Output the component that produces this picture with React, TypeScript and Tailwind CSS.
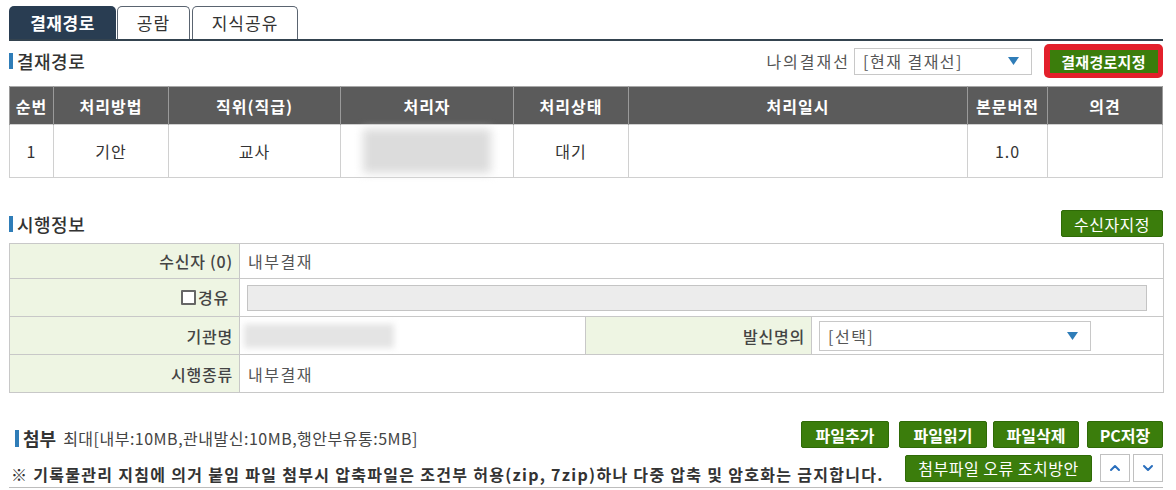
import { ChevronDown, ChevronUp } from "lucide-react";

const FONT = { fontFamily: '"Noto Sans CJK KR", "Noto Sans", sans-serif' };

// 섹션 제목 (파란 바 + 텍스트)
function SectionTitle({ text }: { text: string }) {
    return (
        <div className="flex items-center gap-[4px]">
            <span className="w-[4px] h-[16px] bg-[#2f7db8]" />
            <span className="text-[18px] tracking-[0.5px] leading-none font-medium text-[#333]">{text}</span>
        </div>
    );
}

function GreenButton({ label, className = "" }: { label: string; className?: string }) {
    return (
        <button
            className={`h-[27px] rounded-[2px] bg-[#3b7d0c] border border-[#2f6a07] text-white text-[16px] font-bold leading-none ${className}`}
        >
            {label}
        </button>
    );
}

function SelectBox({ text, className = "" }: { text: string; className?: string }) {
    return (
        <div
            className={`flex items-center justify-between border border-[#c8c8c8] bg-white pl-[8px] pr-[12px] ${className}`}
        >
            <span className="text-[16px] tracking-[1.5px] leading-none text-[#555]">{text}</span>
            <svg width="11" height="8" viewBox="0 0 11 8">
                <path d="M0 0h11L5.5 8z" fill="#2f7db8" />
            </svg>
        </div>
    );
}

const headCols = [
    { label: "순번", w: "w-[44px]" },
    { label: "처리방법", w: "w-[115px]" },
    { label: "직위(직급)", w: "w-[172px]" },
    { label: "처리자", w: "w-[173px]" },
    { label: "처리상태", w: "w-[115px]" },
    { label: "처리일시", w: "w-[339px]" },
    { label: "본문버전", w: "w-[80px]" },
    { label: "의견", w: "w-[115px]" },
];

const cell = "border border-[#d0d0d0]";
const label = "border border-[#c8c8c8] bg-[#eef5e3] text-right pr-[6px] text-[#444] font-medium tracking-[0.8px]";

export default function App() {
    return (
        <div style={FONT} className="w-[1176px] h-[490px] overflow-hidden bg-white pl-[9px] pr-[13px] pt-[6px] text-[#333]">
            {/* 탭 */}
            <div className="flex items-end h-[33px]">
                <div className="w-[107px] h-[33px] rounded-t-[5px] bg-[#293d52] flex items-center justify-center text-white text-[17px] tracking-[0.5px] font-bold">
                    결재경로
                </div>
                <div className="ml-[1px] w-[73px] h-[33px] rounded-t-[5px] border border-b-0 border-[#5a6470] bg-white flex items-center justify-center text-[17px] tracking-[1px] text-[#333]">
                    공람
                </div>
                <div className="ml-[2px] w-[106px] h-[33px] rounded-t-[5px] border border-b-0 border-[#5a6470] bg-white flex items-center justify-center text-[17px] tracking-[1px] text-[#333]">
                    지식공유
                </div>
            </div>
            <div className="h-[2px] bg-[#34434f]" />

            {/* 결재경로 헤더 */}
            <div className="mt-[3px] h-[34px] flex items-center justify-between">
                <SectionTitle text="결재경로" />
                <div className="flex items-center">
                    <span className="text-[16px] tracking-[2px] text-[#555] mr-[4px]">나의결재선</span>
                    <SelectBox text="[현재 결재선]" className="w-[178px] h-[27px]" />
                    <div className="ml-[12px] w-[119px] h-[34px] rounded-[5px] bg-[#e3202b] flex items-center justify-center">
                        <div className="w-[108px] h-[23px] bg-[#3b7d0c] flex items-center justify-center text-white text-[15px] tracking-[0.3px] font-bold leading-none">
                            결재경로지정
                        </div>
                    </div>
                </div>
            </div>

            {/* 결재경로 테이블 */}
            <table className="mt-[8px] w-[1154px] border-collapse border border-[#a8a8a8] table-fixed">
                <thead>
                    <tr className="h-[38px] bg-[#5b5b5b]">
                        {headCols.map((c) => (
                            <th
                                key={c.label}
                                className={`${c.w} border-x border-[#9a9a9a] text-white text-[16px] tracking-[1px] font-bold`}
                            >
                                {c.label}
                            </th>
                        ))}
                    </tr>
                </thead>
                <tbody>
                    <tr className="h-[53px] text-[16px] tracking-[1px] text-[#333] text-center">
                        <td className={cell}>1</td>
                        <td className={cell}>기안</td>
                        <td className={cell}>교사</td>
                        <td className={cell}>
                            <div className="mx-auto w-[128px] h-[44px] bg-[#dcdcdc] blur-[5px]" />
                        </td>
                        <td className={cell}>대기</td>
                        <td className={cell} />
                        <td className={cell}>1.0</td>
                        <td className={cell} />
                    </tr>
                </tbody>
            </table>

            {/* 시행정보 헤더 */}
            <div className="mt-[32px] h-[27px] flex items-center justify-between">
                <SectionTitle text="시행정보" />
                <GreenButton label="수신자지정" className="w-[102px] font-normal tracking-[0.5px]" />
            </div>

            {/* 시행정보 테이블 */}
            <table className="mt-[6px] w-[1154px] border-collapse border border-[#b8b8b8] table-fixed text-[16px]">
                <colgroup>
                    <col className="w-[230px]" />
                    <col className="w-[346px]" />
                    <col className="w-[226px]" />
                    <col className="w-[352px]" />
                </colgroup>
                <tbody>
                    <tr className="h-[35px]">
                        <td className={label}>수신자 (0)</td>
                        <td colSpan={3} className="border border-[#c8c8c8] pl-[8px] text-[#555] tracking-[1.5px]">
                            내부결재
                        </td>
                    </tr>
                    <tr className="h-[38px]">
                        <td className={`${label} !pr-[10px]`}>
                            <span className="inline-flex items-center gap-[2px]">
                                <span className="inline-block w-[15px] h-[15px] border-2 border-[#666] rounded-[1px] bg-white" />
                                경유
                            </span>
                        </td>
                        <td colSpan={3} className="border border-[#c8c8c8] px-[7px]">
                            <div className="w-[900px] h-[26px] bg-[#ececec] border border-[#c4c4c4]" />
                        </td>
                    </tr>
                    <tr className="h-[38px]">
                        <td className={label}>기관명</td>
                        <td className="border border-[#c8c8c8] pl-[4px]">
                            <div className="w-[150px] h-[24px] bg-[#e4e4e4] blur-[3px]" />
                        </td>
                        <td className={label}>발신명의</td>
                        <td className="border border-[#c8c8c8] pl-[7px]">
                            <SelectBox text="[선택]" className="w-[272px] h-[30px]" />
                        </td>
                    </tr>
                    <tr className="h-[38px]">
                        <td className={label}>시행종류</td>
                        <td colSpan={3} className="border border-[#c8c8c8] pl-[8px] text-[#555] tracking-[1.5px]">
                            내부결재
                        </td>
                    </tr>
                </tbody>
            </table>

            {/* 첨부 */}
            <div className="mt-[28px] border-b border-[#bdbdbd] pb-[5px]">
                <div className="flex items-end justify-between h-[27px]">
                    <div className="flex items-center gap-[4px] pl-[6px] pb-[1px]">
                        <span className="w-[4px] h-[17px] bg-[#2f7db8]" />
                        <span className="text-[18px] font-bold text-[#333] leading-none">첨부</span>
                        <span className="ml-[3px] text-[16px] tracking-[0.5px] text-[#444] leading-none">
                            최대[내부:10MB,관내발신:10MB,행안부유통:5MB]
                        </span>
                    </div>
                    <div className="flex items-center">
                        <GreenButton label="파일추가" className="w-[88px]" />
                        <GreenButton label="파일읽기" className="ml-[10px] w-[88px]" />
                        <GreenButton label="파일삭제" className="ml-[6px] w-[86px]" />
                        <GreenButton label="PC저장" className="ml-[8px] w-[76px]" />
                    </div>
                </div>
                <div className="mt-[6px] flex items-end justify-between h-[28px]">
                    <div className="pl-[2px] text-[16px] tracking-[1.3px] font-semibold text-[#333] leading-none whitespace-nowrap">
                        ※ 기록물관리 지침에 의거 붙임 파일 첨부시 압축파일은 조건부 허용(zip, 7zip)하나 다중 압축 및 암호화는 금지합니다.
                    </div>
                    <div className="flex items-center">
                        <GreenButton label="첨부파일 오류 조치방안" className="w-[187px] font-normal tracking-[0.5px]" />
                        <button className="ml-[8px] w-[30px] h-[28px] border border-[#c0c0c0] bg-white flex items-center justify-center text-[#2a6fbd]">
                            <ChevronUp size={16} strokeWidth={3} />
                        </button>
                        <button className="ml-[3px] w-[30px] h-[28px] border border-[#c0c0c0] bg-white flex items-center justify-center text-[#2a6fbd]">
                            <ChevronDown size={16} strokeWidth={3} />
                        </button>
                    </div>
                </div>
            </div>
        </div>
    );
}
